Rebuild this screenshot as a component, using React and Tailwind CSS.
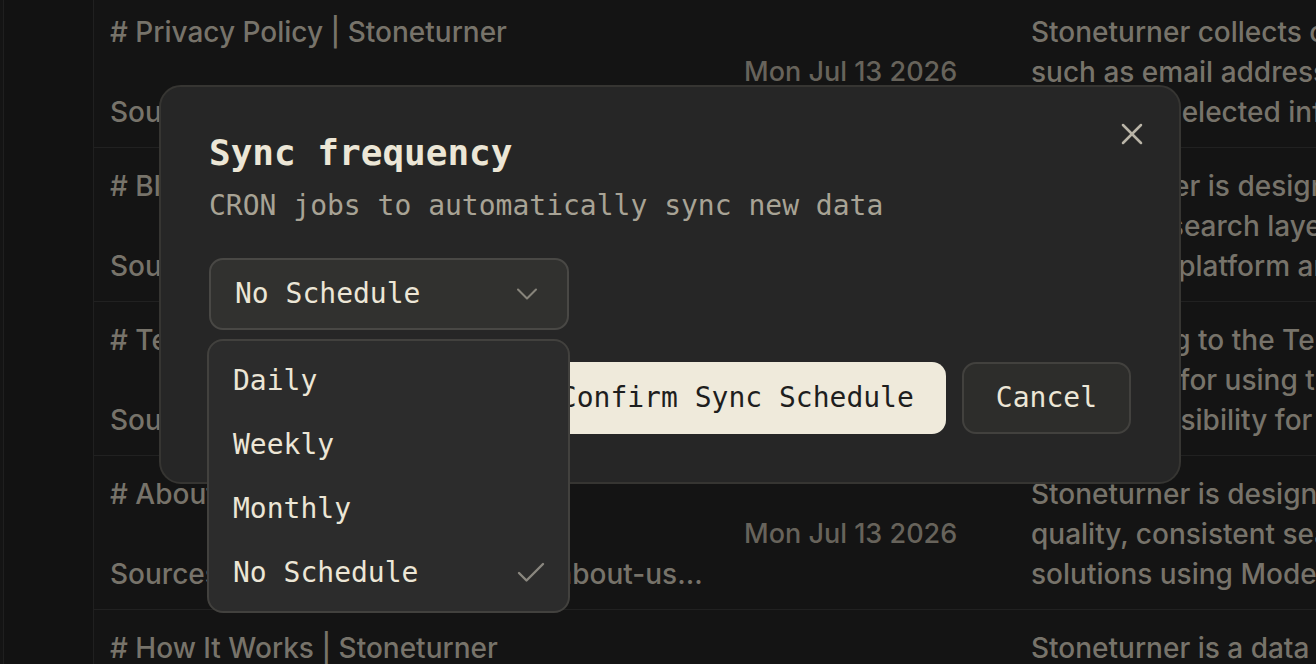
import React from "react";
import { X, ChevronDown, Check } from "lucide-react";

const pages = [
  {
    title: "# Privacy Policy | Stoneturner",
    source: "Sources: https://stoneturner.app/privacy-policy",
    date: "Mon Jul 13 2026",
    summary: [
      "Stoneturner collects only the information needed to run the service,",
      "such as email addresses, account settings and usage data",
      "and other selected information shared by users.",
    ],
  },
  {
    title: "# Blog | Stoneturner",
    source: "Sources: https://stoneturner.app/blog",
    date: "Mon Jul 13 2026",
    summary: [
      "The explorer is designed to help teams find answers fast,",
      "one clean search layer over every document and note",
      "across the platform and its connected sources.",
    ],
  },
  {
    title: "# Terms of Service | Stoneturner",
    source: "Sources: https://stoneturner.app/terms",
    date: "Mon Jul 13 2026",
    summary: [
      "By agreeing to the Terms of Service you accept the rules",
      "Guidelines for using the product and its integrations",
      "Our responsibility for third-party content is limited.",
    ],
  },
  {
    title: "# About | Stoneturner",
    source: "Sources: https://stoneturner.app/about-us-and-the-team",
    date: "Mon Jul 13 2026",
    summary: [
      "Stoneturner is designed to give every team high",
      "quality, consistent search across their knowledge",
      "solutions using Model Context Protocol servers.",
    ],
  },
  {
    title: "# How It Works | Stoneturner",
    source: "Sources: https://stoneturner.app/how-it-works",
    date: "Mon Jul 13 2026",
    summary: [
      "Stoneturner is a data layer that indexes your tools",
      "and keeps every source synced on a schedule",
      "so search results always stay fresh.",
    ],
  },
];

const options = ["Daily", "Weekly", "Monthly", "No Schedule"];

const mono = "font-['DejaVu_Sans_Mono','Liberation_Mono',monospace]";

function PageRow({ page }) {
  return (
    <div className="grid grid-cols-[634px_287px_1fr] h-[154px] border-b border-[#212121] pt-[18px] pb-4 text-[28px] font-medium leading-[40px] text-[#77736a]">
      <div className="px-4 flex flex-col justify-between min-w-0">
        <div className="truncate">{page.title}</div>
        <div className="truncate">{page.source}</div>
      </div>
      <div className="px-4 flex items-center text-[#67635b] text-[27px]">{page.date}</div>
      <div className="px-4 whitespace-nowrap">
        {page.summary.map((line) => (
          <div key={line}>{line}</div>
        ))}
      </div>
    </div>
  );
}

function SyncDialog() {
  return (
    <div className="absolute left-[159px] top-[85px] w-[1022px] rounded-[22px] border-2 border-[#363532] bg-[#262626] px-12 pt-12 pb-12">
      <button className="absolute right-[29px] top-[29px] text-[#bab5a8]">
        <X size={36} strokeWidth={1.7} />
      </button>
      <h2 className={`${mono} text-[36px] leading-[36px] font-bold text-[#ece6d6]`}>
        Sync frequency
      </h2>
      <p className={`${mono} mt-[15px] text-[28px] leading-[40px] text-[#a8a395]`}>
        CRON jobs to automatically sync new data
      </p>

      <div className="relative mt-[32px] w-[360px]">
        <div className={`${mono} flex h-[72px] items-center justify-between rounded-[14px] border-2 border-[#494845] bg-[#31312f] pl-6 pr-[22px] text-[28px] text-[#ece6d6]`}>
          <span>No Schedule</span>
          <ChevronDown size={36} strokeWidth={1.4} className="text-[#87847b]" />
        </div>

        <div className="absolute left-[-2px] top-[81px] z-10 w-[363px] rounded-[16px] border-2 border-[#42413e] bg-[#2c2c2c] px-2 pt-2 pb-[6px]">
          {options.map((opt) => (
            <div
              key={opt}
              className={`${mono} flex h-16 items-center justify-between pl-4 pr-[11px] text-[28px] text-[#ece6d6]`}
            >
              <span>{opt}</span>
              {opt === "No Schedule" && (
                <Check size={36} strokeWidth={1.6} className="text-[#8a877f]" />
              )}
            </div>
          ))}
        </div>
      </div>

      <div className="mt-[32px] flex justify-end gap-4">
        <button className={`${mono} h-[72px] rounded-[14px] bg-[#efeadb] px-8 text-[28px] text-[#1e1e1e]`}>
          Confirm Sync Schedule
        </button>
        <button className={`${mono} h-[72px] rounded-[14px] border-2 border-[#42413e] bg-[#2d2d2b] px-8 text-[28px] text-[#ece6d6]`}>
          Cancel
        </button>
      </div>
    </div>
  );
}

export default function App() {
  return (
    <div className="relative flex h-[664px] w-[1316px] overflow-hidden bg-[#141414] font-['Inter',sans-serif]">
      <aside className="ml-[3px] w-[90px] shrink-0 border-l border-[#1f1f1f] bg-[#121212]" />
      <main className="-mt-[6px] flex-1 border-l border-[#202020]">
        {pages.map((p) => (
          <PageRow key={p.title} page={p} />
        ))}
      </main>
      <SyncDialog />
    </div>
  );
}
